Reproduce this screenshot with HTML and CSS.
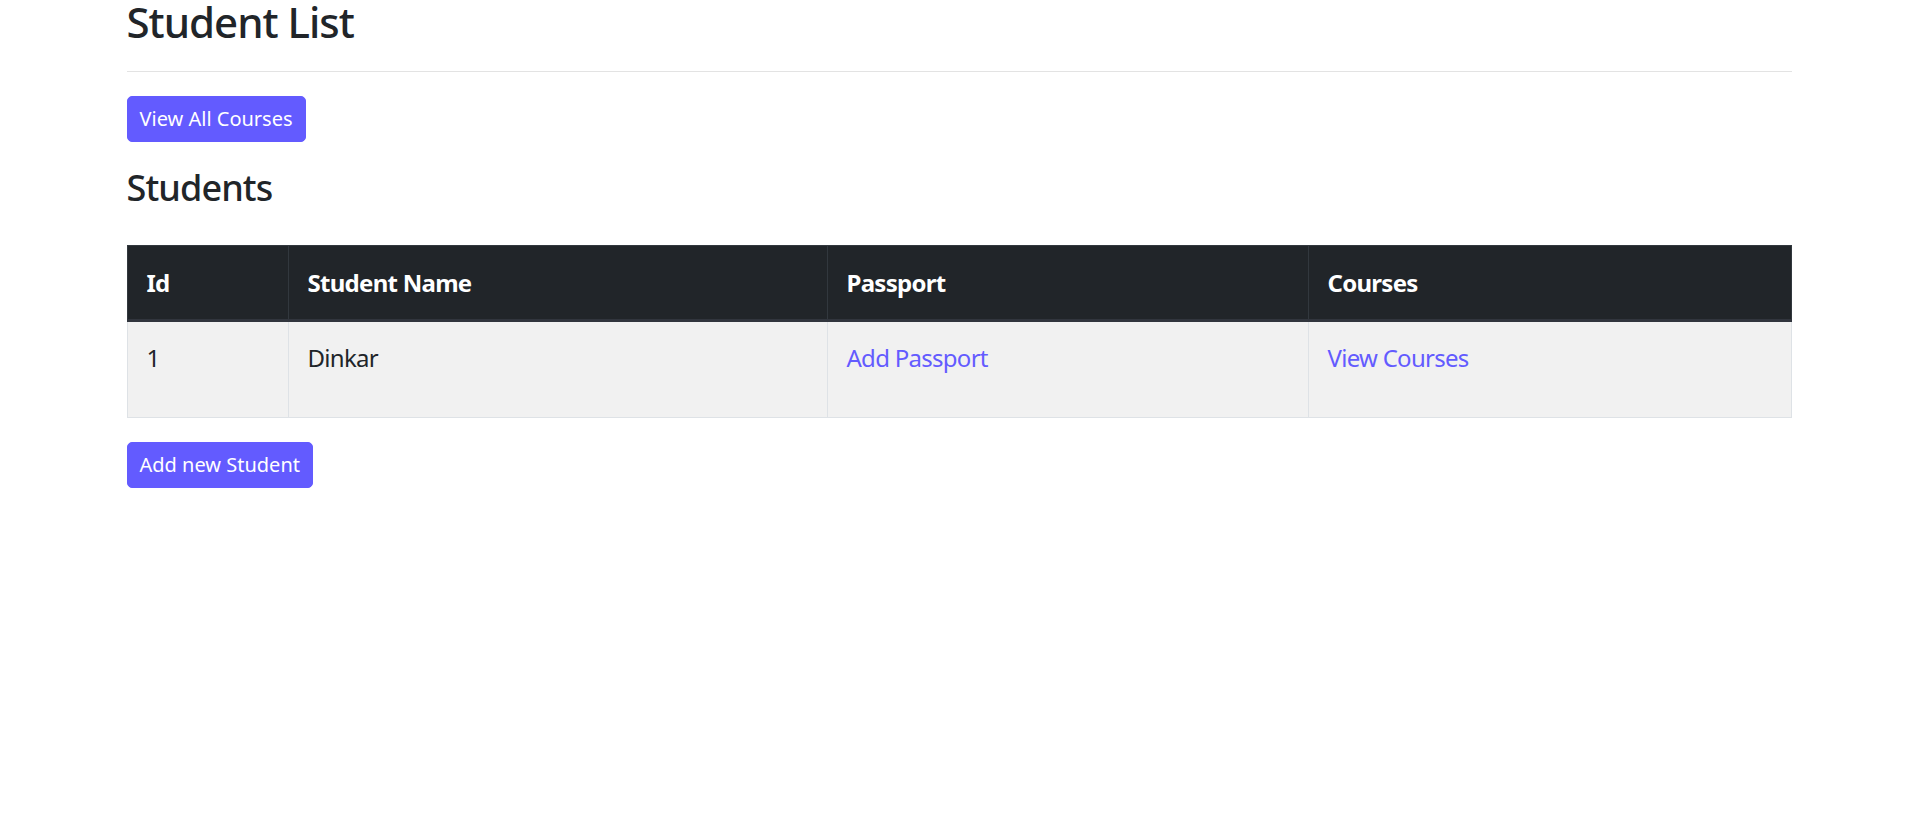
FILE: index.html
```html
<!DOCTYPE html>
<html lang="en">
<head>
<meta charset="utf-8">
<title>Student List</title>
<link rel="stylesheet" href="styles.css">
</head>
<body>
<div class="container">
  <h1 class="page-title">Student List</h1>
  <hr class="divider">
  <a class="btn" href="#">View All Courses</a>
  <h2 class="section-title">Students</h2>
  <table class="students">
    <colgroup>
      <col class="col-id">
      <col class="col-name">
      <col class="col-passport">
      <col class="col-courses">
    </colgroup>
    <thead>
      <tr>
        <th>Id</th>
        <th>Student Name</th>
        <th>Passport</th>
        <th>Courses</th>
      </tr>
    </thead>
    <tbody>
      <tr>
        <td>1</td>
        <td>Dinkar</td>
        <td><a class="link" href="#">Add Passport</a></td>
        <td><a class="link" href="#">View Courses</a></td>
      </tr>
    </tbody>
  </table>
  <a class="btn" href="#">Add new Student</a>
</div>
</body>
</html>
```

FILE: styles.css
```css
html, body {
  margin: 0;
  padding: 0;
  background: #ffffff;
}

body {
  font-family: "Noto Sans", "Open Sans", sans-serif;
  font-size: 24px;
  line-height: 1.5;
  color: #212529;
}

.container {
  max-width: 1665px;
  margin: 0 auto;
}

.page-title {
  margin: 0;
  padding-top: 1px;
  font-size: 42px;
  font-weight: 500;
  line-height: 42px;
  letter-spacing: -1px;
}

.divider {
  margin: 28px 0 24px;
  border: 0;
  border-top: 1px solid #e3e3e3;
  height: 0;
}

.btn {
  display: inline-block;
  box-sizing: border-box;
  font-size: 20px;
  line-height: 32px;
  padding: 6px 12px;
  border: 1px solid #635bff;
  border-radius: 5px;
  background: #635bff;
  color: #ffffff;
  text-decoration: none;
  vertical-align: top;
}

.section-title {
  margin: 24px 0 36px;
  font-size: 36px;
  font-weight: 500;
  line-height: 43px;
  letter-spacing: -0.9px;
}

.students {
  width: 100%;
  table-layout: fixed;
  border-collapse: collapse;
  margin-bottom: 24px;
  letter-spacing: -0.03em;
}

.col-id { width: 161px; }
.col-name { width: 539px; }
.col-passport { width: 481px; }

.students th,
.students td {
  text-align: left;
  vertical-align: top;
  padding: 18px 18px 18px 19px;
  line-height: 36px;
}

.students th {
  background: #212529;
  color: #ffffff;
  font-weight: 700;
  border: 1px solid #32383e;
  border-bottom: 3px solid #31353d;
  padding-top: 19px;
}

.students td {
  background: #f1f1f1;
  border: 1px solid #dee2e6;
  border-top: 0;
  padding-bottom: 41px;
}

.link {
  color: #635bff;
  text-decoration: none;
}
```
